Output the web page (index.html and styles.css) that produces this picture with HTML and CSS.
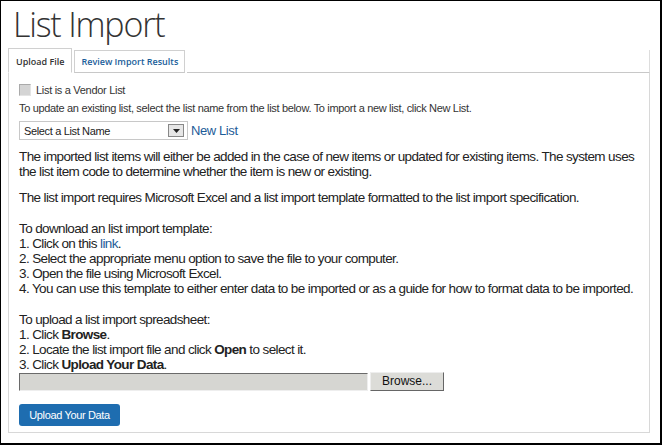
FILE: index.html
```html
<!DOCTYPE html>
<html>
<head>
<meta charset="utf-8">
<link rel="stylesheet" href="styles.css">
</head>
<body>
<div class="frame">
  <h1 class="title">List Import</h1>
  <div class="tabs">
    <div class="tab active">Upload File</div>
    <div class="tab">Review Import Results</div>
    <div class="tab-fill"></div>
  </div>
  <div class="panel">
    <label class="check-row"><span class="checkbox"></span>List is a Vendor List</label>
    <p class="small">To update an existing list, select the list name from the list below. To import a new list, click New List.</p>
    <div class="select-row">
      <div class="select"><span>Select a List Name</span><span class="arrow"><svg width="7" height="4" viewBox="0 0 7 4"><path d="M0 0h7L3.5 4z" fill="#222"/></svg></span></div>
      <a class="newlist">New List</a>
    </div>
    <p class="body first">The imported list items will either be added in the case of new items or updated for existing items. The system uses the list item code to determine whether the item is new or existing.</p>
    <p class="body second">The list import requires Microsoft Excel and a list import template formatted to the list import specification.</p>
    <p class="body">To download an list import template:<br>1. Click on this <a class="link">link</a>.<br>2. Select the appropriate menu option to save the file to your computer.<br>3. Open the file using Microsoft Excel.<br>4. You can use this template to either enter data to be imported or as a guide for how to format data to be imported.</p>
    <p class="body">To upload a list import spreadsheet:<br>1. Click <b>Browse</b>.<br>2. Locate the list import file and click <b>Open</b> to select it.<br>3. Click <b>Upload Your Data</b>.</p>
    <div class="file-row">
      <div class="file-field"></div>
      <div class="browse">Browse...</div>
    </div>
    <div class="upload">Upload Your Data</div>
  </div>
</div>
</body>
</html>
```
FILE: styles.css
```css
* { box-sizing: border-box; }
html, body { margin: 0; padding: 0; background: #fff; }
.frame {
  width: 662px;
  height: 445px;
  border: 1px solid #000;
  border-bottom-width: 2px;
  border-right-width: 2px;
  overflow: hidden;
  font-family: "Liberation Sans", Arial, sans-serif;
  color: #222;
}
.title {
  margin: 0 0 0 12px;
  padding-top: 1px;
  font-family: "Open Sans", sans-serif;
  font-weight: 300;
  font-size: 34px;
  line-height: 44px;
  color: #333;
  letter-spacing: -1.2px;
}
.tabs {
  display: flex;
  align-items: flex-end;
  margin: 2px 10px 0 7px;
  height: 25px;
}
.tab {
  font-family: "Open Sans", sans-serif;
  font-weight: 600;
  font-size: 9px;
  color: #1a5e9a;
  height: 23px;
  line-height: 21px;
  padding: 0 6px;
  border: 1px solid #d0d0d0;
  border-bottom: 1px solid #c8c8c8;
  margin-right: 2px;
  background: #fff;
}
.tab.active {
  height: 25px;
  line-height: 25px;
  color: #333;
  border-bottom-color: #fff;
  padding: 0 7px;
}
.tab-fill {
  flex: 1;
  border-bottom: 1px solid #c8c8c8;
  border-right: 1px solid #ddd;
  height: 23px;
}
.panel {
  margin: 0 10px 0 7px;
  height: 360px;
  border: 1px solid #d8d8d8;
  border-top: none;
  padding: 10px 0 0 10px;
}
.check-row {
  display: flex;
  align-items: center;
  font-size: 11px;
  letter-spacing: -0.3px;
  color: #333;
  height: 14px;
}
.checkbox {
  width: 12px;
  height: 12px;
  background: #d4d4d4;
  border: 1px solid #aaa;
  border-right-color: #e4e4e4;
  border-bottom-color: #e4e4e4;
  margin-right: 5px;
}
.small {
  margin: 4px 0 0 0;
  font-size: 11px;
  letter-spacing: -0.33px;
  line-height: 15px;
  color: #333;
}
.select-row {
  display: flex;
  align-items: center;
  margin-top: 5px;
}
.select {
  width: 169px;
  height: 19px;
  border: 1px solid #c8c8c8;
  display: flex;
  align-items: center;
  justify-content: space-between;
  font-size: 11px;
  letter-spacing: -0.35px;
  padding: 0 3px 0 4px;
  color: #222;
}
.arrow {
  width: 16px;
  height: 13px;
  border: 1px solid #888;
  background: #e6e6e6;
  display: flex;
  align-items: center;
  justify-content: center;
}
.newlist {
  margin-left: 3px;
  font-size: 13px;
  color: #1d5c98;
  letter-spacing: -0.4px;
}
.body {
  margin: 0;
  font-size: 13.5px;
  line-height: 15px;
  letter-spacing: -0.62px;
  color: #222;
  margin-top: 16px;
}
.body.first { margin-top: 9px; }
.body.second { margin-top: 11px; }
.body b { font-weight: bold; }
.link { color: #1d5c98; }
.file-row {
  display: flex;
  align-items: center;
  margin-top: 0px;
  height: 19px;
}
.file-field {
  width: 349px;
  height: 18px;
  background: #d6d6d2;
  border-top: 1px solid #6a6a6a;
  border-left: 1px solid #6a6a6a;
  border-right: 1px solid #eee;
  border-bottom: 1px solid #eee;
}
.browse {
  margin-left: 2px;
  width: 74px;
  height: 19px;
  background: #dcdcd8;
  border: 1px solid #eee;
  border-right-color: #666;
  border-bottom-color: #666;
  font-size: 12px;
  text-align: center;
  line-height: 17px;
  color: #111;
}
.upload {
  margin-top: 13px;
  width: 101px;
  height: 22px;
  background: #1e6db0;
  border-radius: 3px;
  color: #fff;
  font-size: 11px;
  letter-spacing: -0.35px;
  line-height: 22px;
  text-align: center;
}
```
